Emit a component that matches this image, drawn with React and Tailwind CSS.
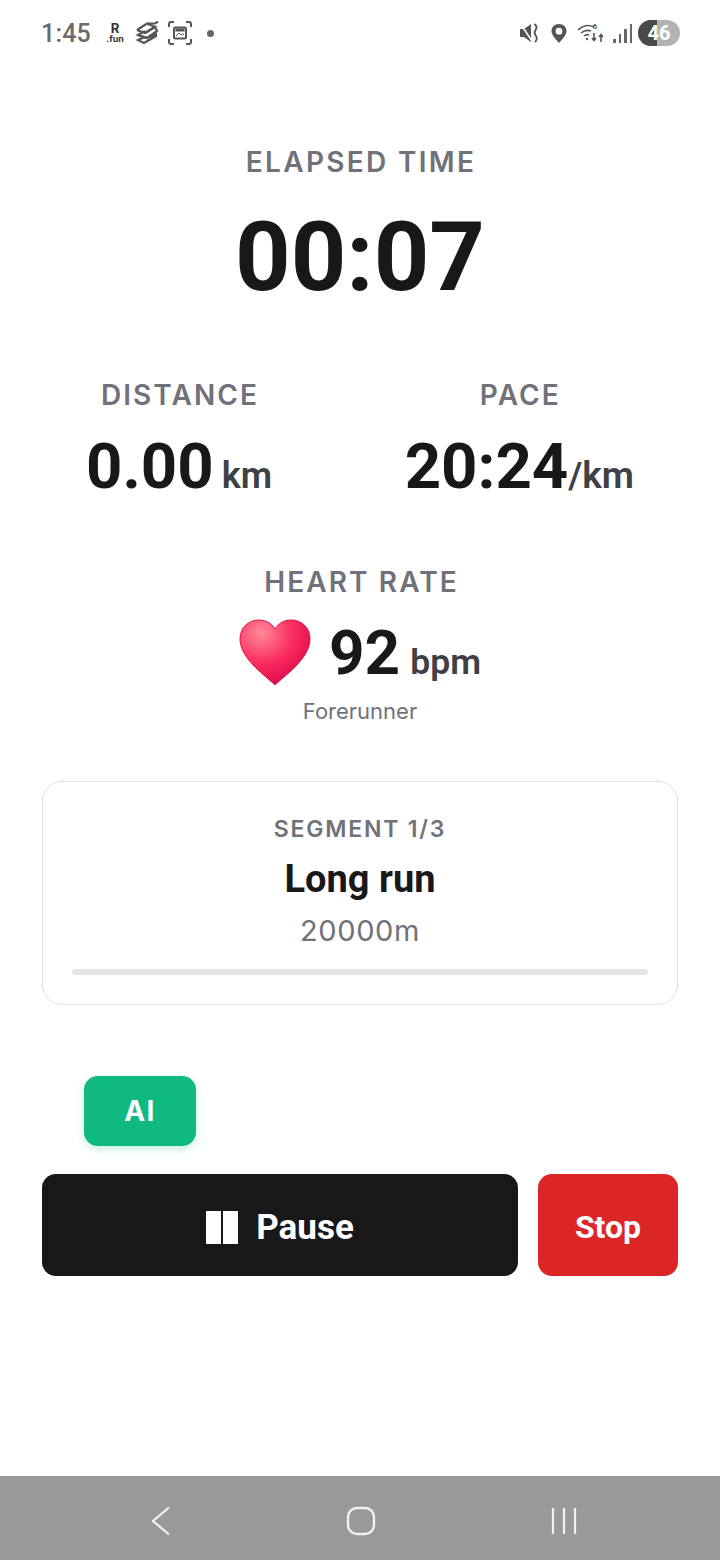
const INTER = "font-['Inter',sans-serif]";
const ROBOTO = "font-['Roboto',sans-serif]";

function StatusLeft() {
  return (
    <div className="flex items-center">
      <span className={`${ROBOTO} text-[25px] leading-none font-medium tracking-[0.2px] text-[#6b6b6b]`}>1:45</span>
      <div className="ml-[13px] flex w-[22px] flex-col items-center text-[#333]">
        <span className={`${INTER} text-[13px] leading-[11px] font-bold`}>R</span>
        <span className={`${INTER} text-[9px] leading-[9px] font-bold`}>.fun</span>
      </div>
      <svg className="ml-[9px]" width="24" height="24" viewBox="0 0 24 24" fill="none" stroke="#555" strokeWidth="2.2">
        <path d="M2 9 L12 2.5 L20 2.5 L23 0.5" />
        <path d="M2 9 L10 12 L20 6 L12 2.5" />
        <path d="M10 12 L20 6 L22 10 L12 17 L3 14 L10 10" />
        <path d="M3 14 L12 17 L21 13 L21 15 L9 22 L3 19 L10 16" />
      </svg>
      <svg className="ml-[8px]" width="26" height="26" viewBox="0 0 26 26" fill="none" stroke="#555" strokeWidth="2">
        <path d="M2 7 V4 Q2 2 4 2 H7 M19 2 H22 Q24 2 24 4 V7 M24 19 V22 Q24 24 22 24 H19 M7 24 H4 Q2 24 2 22 V19" />
        <rect x="7" y="7.5" width="12" height="11" rx="1.5" />
        <rect x="8.5" y="8.5" width="9" height="3" fill="#555" stroke="none" />
        <path d="M9 16 L12 13 L14 15 L15.5 13.5 L17 15" strokeWidth="1" />
      </svg>
      <span className="ml-[14px] h-[7px] w-[7px] rounded-full bg-[#666]" />
    </div>
  );
}

function StatusRight() {
  return (
    <div className="flex items-center">
      <svg width="22" height="24" viewBox="0 0 22 24" fill="#555">
        <path d="M1 8 H5 L12 3 V21 L5 16 H1 Z" />
        <path d="M1 2 L13 20" stroke="#fff" strokeWidth="1.5" />
        <path d="M15.5 3 Q19 6 16.5 9 Q14.5 12 17 15 Q19 18 16 21" stroke="#555" strokeWidth="1.8" fill="none" />
      </svg>
      <svg className="ml-[9px]" width="18" height="24" viewBox="0 0 18 24" fill="#555">
        <path fillRule="evenodd" d="M9 3 C4.5 3 1.5 6.3 1.5 10 C1.5 14 5.5 18 9 22 C12.5 18 16.5 14 16.5 10 C16.5 6.3 13.5 3 9 3 Z M9 6.8 A3.4 3.4 0 1 1 9 13.6 A3.4 3.4 0 1 1 9 6.8 Z" />
      </svg>
      <svg className="ml-[9px]" width="28" height="24" viewBox="0 0 28 24" fill="none" stroke="#555" strokeWidth="1.6">
        <path d="M1 9 Q9 2 17 6 M4 12 Q9 8 14 10 M7 15 Q9.5 13 12 14" />
        <circle cx="10" cy="18" r="1.2" fill="#555" stroke="none" />
        <path d="M17 12 V19 M15 17 L17 19.5 L19 17 M24 21 V14 M22 16 L24 13.5 L26 16" />
        <text x="15.5" y="8" fontSize="8" fill="#555" stroke="none" fontFamily="Roboto" fontWeight="700">6</text>
      </svg>
      <div className="ml-[8px] flex h-[20px] items-end gap-[3px]">
        <span className="h-[4px] w-[2.5px] bg-[#666]" />
        <span className="h-[9px] w-[2.5px] bg-[#666]" />
        <span className="h-[14px] w-[2.5px] bg-[#666]" />
        <span className="h-[19px] w-[2.5px] bg-[#666]" />
      </div>
      <div className="relative ml-[6px] flex h-[26px] w-[42px] overflow-hidden rounded-full bg-[#b3b3b3]">
        <span className="h-full w-[19px] bg-[#4a4a4a]" />
        <span className={`${ROBOTO} absolute inset-0 text-center text-[20px] leading-[26px] font-bold text-white`}>46</span>
      </div>
    </div>
  );
}

function Metric({ label, value, unit }) {
  return (
    <div className="flex flex-col items-center">
      <span className={`${INTER} pl-[2px] text-[28px] leading-[32px] font-semibold tracking-[2.1px] text-[#71717a]`}>{label}</span>
      <div className="mt-[20px] flex items-baseline">
        <span className={`${ROBOTO} text-[63.5px] leading-[72px] font-bold text-[#18181b]`}>{value}</span>
        <span className={`${ROBOTO} text-[37px] font-semibold text-[#3f3f46]`}>{unit}</span>
      </div>
    </div>
  );
}

function Heart() {
  return (
    <svg width="72" height="68" viewBox="0 0 72 68">
      <defs>
        <radialGradient id="heart" cx="0.3" cy="0.2" r="0.9">
          <stop offset="0" stopColor="#ff8a98" />
          <stop offset="0.5" stopColor="#fb2f5f" />
          <stop offset="1" stopColor="#d9004a" />
        </radialGradient>
      </defs>
      <path
        d="M36 66 C28 58 1 40 1 20 C1 8 10 1 20 1 C28 1 33 5 36 10 C39 5 44 1 52 1 C62 1 71 8 71 20 C71 40 44 58 36 66 Z"
        fill="url(#heart)"
        stroke="#dc1548"
        strokeWidth="1"
      />
    </svg>
  );
}

export default function App() {
  return (
    <div className="flex h-[1560px] w-[720px] flex-col bg-white">
      <div className="flex h-[66px] items-center justify-between pr-[40px] pl-[41px]">
        <StatusLeft />
        <StatusRight />
      </div>

      <div className="flex flex-1 flex-col px-[42px]">
        <div className="mt-[79px] flex flex-col items-center">
          <span className={`${INTER} pl-[2px] text-[28px] leading-[34px] font-semibold tracking-[2.3px] text-[#71717a]`}>ELAPSED TIME</span>
          <span className={`${ROBOTO} mt-[22px] text-[97px] leading-[112px] font-bold text-[#18181b]`}>00:07</span>
        </div>

        <div className="mt-[66px] flex justify-between px-[44px]">
          <Metric label="DISTANCE" value="0.00" unit={<span className="ml-[8px] text-[36px]">km</span>} />
          <Metric label="PACE" value="20:24" unit="/km" />
        </div>

        <div className="mt-[62px] flex flex-col items-center">
          <span className={`${INTER} pl-[3px] text-[28px] leading-[32px] font-semibold tracking-[2.1px] text-[#71717a]`}>HEART RATE</span>
          <div className="mt-[19px] flex items-center">
            <Heart />
            <div className="ml-[18px] flex items-baseline">
              <span className={`${ROBOTO} text-[62px] leading-[72px] font-bold text-[#18181b]`}>92</span>
              <span className={`${ROBOTO} ml-[10px] text-[35.5px] font-semibold text-[#3f3f46]`}>bpm</span>
            </div>
          </div>
          <span className={`${INTER} mt-[9px] text-[22px] leading-[26px] text-[#71717a]`}>Forerunner</span>
        </div>

        <div className="mt-[57px] flex h-[224px] flex-col items-center rounded-[20px] border border-[#e0e0e3] px-[29px] pt-[33px]">
          <span className={`${INTER} text-[23px] leading-[28px] font-semibold tracking-[1.8px] text-[#71717a]`}>SEGMENT 1/3</span>
          <span className={`${ROBOTO} mt-[14px] text-[38px] leading-[44px] font-bold text-[#18181b]`}>Long run</span>
          <span className={`${INTER} mt-[14px] text-[29px] leading-[32px] tracking-[0.6px] text-[#71717a]`}>20000m</span>
          <div className="mt-[22px] h-[6px] w-full rounded-full bg-[#e5e5e7]" />
        </div>

        <div className="mt-[71px] ml-[42px] flex h-[70px] w-[112px] items-center justify-center rounded-[14px] bg-[#10b981] shadow-[0_3px_8px_rgba(16,185,129,0.25)]">
          <span className={`${INTER} text-[28px] font-bold tracking-[1.4px] text-white`}>AI</span>
        </div>

        <div className="mt-[28px] flex gap-[20px]">
          <div className="flex h-[102px] flex-1 items-center justify-center rounded-[14px] bg-[#18181b]">
            <span className="mt-[5px] h-[33px] w-[15px] bg-white" />
            <span className="mt-[5px] ml-[2px] h-[33px] w-[15px] bg-white" />
            <span className={`${ROBOTO} ml-[18px] pt-[6px] text-[35px] font-bold text-white`}>Pause</span>
          </div>
          <div className="flex h-[102px] w-[140px] items-center justify-center rounded-[14px] bg-[#dc2626]">
            <span className={`${ROBOTO} pt-[4px] text-[32px] font-bold text-white`}>Stop</span>
          </div>
        </div>
      </div>

      <div className="flex h-[84px] items-center bg-[#999999] pt-[6px]">
        <div className="flex w-[720px] items-center justify-between pr-[142px] pl-[151px]">
          <svg width="20" height="30" viewBox="0 0 20 30" fill="none" stroke="#f2f2f2" strokeWidth="2.2">
            <path d="M18 1.5 L2 15 L18 28.5" />
          </svg>
          <svg width="30" height="30" viewBox="0 0 30 30" fill="none" stroke="#f2f2f2" strokeWidth="2.4">
            <rect x="2" y="2" width="26" height="26" rx="9" />
          </svg>
          <svg width="28" height="30" viewBox="0 0 28 30" fill="none" stroke="#f2f2f2" strokeWidth="2.2">
            <path d="M3 2 V28 M14 2 V28 M25 2 V28" />
          </svg>
        </div>
      </div>
    </div>
  );
}
